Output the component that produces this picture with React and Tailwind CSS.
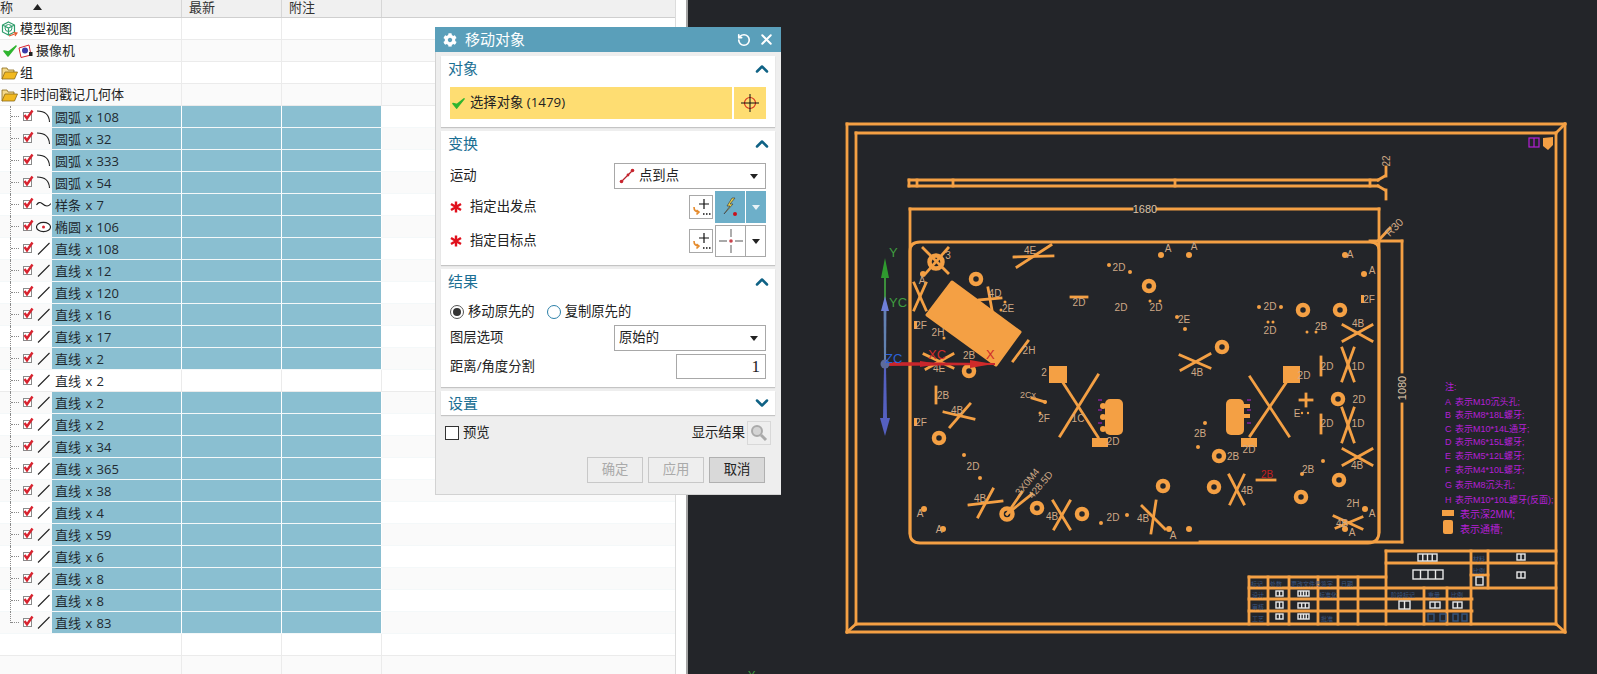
import React from 'react';
import { ChevronUp, ChevronDown, RotateCcw, X } from 'lucide-react';
import { FaCog } from 'react-icons/fa';

const ITEMS = [
    ['arc', '圆弧 x 108'], ['arc', '圆弧 x 32'], ['arc', '圆弧 x 333'], ['arc', '圆弧 x 54'],
    ['spline', '样条 x 7'], ['ellipse', '椭圆 x 106'],
    ['line', '直线 x 108'], ['line', '直线 x 12'], ['line', '直线 x 120'], ['line', '直线 x 16'],
    ['line', '直线 x 17'], ['line', '直线 x 2'], ['line', '直线 x 2', true], ['line', '直线 x 2'],
    ['line', '直线 x 2'], ['line', '直线 x 34'], ['line', '直线 x 365'], ['line', '直线 x 38'],
    ['line', '直线 x 4'], ['line', '直线 x 59'], ['line', '直线 x 6'], ['line', '直线 x 8'],
    ['line', '直线 x 8'], ['line', '直线 x 83'],
];

const RedCheck = () => (
    <svg width="12" height="13" viewBox="0 0 12 13" className="flex-none">
        <rect x="1.5" y="3.5" width="8" height="8" fill="#fff" stroke="#8a8a8a" />
        <path d="M2.5 6 L5 9.5 L10.5 1.5" fill="none" stroke="#d8232f" strokeWidth="2.4" />
    </svg>
);

const GeomIcon = ({ type }) => (
    <svg width="15" height="15" viewBox="0 0 15 15" className="flex-none ml-[2px]">
        {type === 'arc' && <path d="M1 2 Q13 2 13.5 13" fill="none" stroke="#222" strokeWidth="1.1" />}
        {type === 'spline' && <path d="M0.5 8 Q3 4 6 6.5 T11 9 T15 6.5" fill="none" stroke="#222" strokeWidth="1.1" />}
        {type === 'ellipse' && (
            <>
                <ellipse cx="7.5" cy="8" rx="7" ry="4.6" fill="#fff" stroke="#222" strokeWidth="1.1" />
                <circle cx="7.5" cy="8" r="1.5" fill="#d8232f" />
            </>
        )}
        {type === 'line' && <path d="M2 13.5 L13.5 2" fill="none" stroke="#222" strokeWidth="1.1" />}
    </svg>
);

const Folder = () => (
    <svg width="17" height="14" viewBox="0 0 17 14" className="flex-none">
        <path d="M1 3 L1 2 L6 2 L7 4 L13 4 L13 6 L1 13 Z" fill="#f4d98a" stroke="#8a6a1a" strokeWidth="0.8" />
        <path d="M1 13 L4 6 L16.5 6 L13.5 13 Z" fill="#f2b91f" stroke="#8a6a1a" strokeWidth="0.8" />
    </svg>
);

const ViewIcon = () => (
    <svg width="17" height="17" viewBox="0 0 17 17" className="flex-none">
        <path d="M7.5 1 L13.5 4 L13.5 11 L7.5 14 L1.5 11 L1.5 4 Z M1.5 4 L7.5 7 L13.5 4 M7.5 7 L7.5 14" fill="none" stroke="#2f9e6c" strokeWidth="1.2" />
        <circle cx="7.5" cy="7" r="3.5" fill="none" stroke="#2f9e6c" strokeWidth="1" />
        <path d="M8 15 L15 12.5 M12.5 11.5 L16 12 L14 15" fill="none" stroke="#e4572e" strokeWidth="1.2" />
    </svg>
);

const GreenCheck = ({ size = 14 }) => (
    <svg width={size} height={size} viewBox="0 0 14 14" className="flex-none">
        <path d="M1 7 L5 12 L13 2 L5.5 8 Z" fill="#2fb52f" stroke="#2fb52f" strokeWidth="1.6" strokeLinejoin="round" />
    </svg>
);

const CameraIcon = () => (
    <svg width="15" height="15" viewBox="0 0 15 15" className="flex-none">
        <path d="M1 4 L11 1 L13 11 L3 13.5 Z" fill="#fff" stroke="#d8232f" strokeWidth="1" />
        <circle cx="7" cy="6.5" r="3" fill="#3a3aa8" />
        <rect x="11" y="8" width="3.5" height="4" fill="#222" />
    </svg>
);

const HeaderCell = ({ width, children }) => (
    <div className={`${width} flex-none h-full border-r border-[#d6d6d6] flex items-center leading-[15px] overflow-hidden`}>{children}</div>
);

const PlainRow = ({ alt, children }) => (
    <div className={`flex h-[22px] flex-none border-b border-[#ebebeb] ${alt ? 'bg-[#fafafa]' : 'bg-white'}`}>
        <div className="w-[182px] flex-none border-r border-[#ebebeb] flex items-center overflow-hidden pt-[1px]">{children}</div>
        <div className="w-[100px] flex-none border-r border-[#ebebeb]" />
        <div className="w-[100px] flex-none border-r border-[#ebebeb]" />
        <div className="flex-1" />
    </div>
);

const TreeRow = ({ type, label, plain, alt, last }) => {
    const blue = plain ? '' : 'bg-[#8abfd1]';
    return (
        <div className={`flex h-[22px] flex-none border-b ${alt ? 'bg-[#fafafa]' : 'bg-white'} ${plain ? 'border-[#ebebeb]' : 'border-[#f4f8f9]'}`}>
            <div className="w-[52px] flex-none flex items-center">
                <div className={`ml-[10px] w-[9px] flex-none self-start ${last ? 'h-[11px]' : 'h-[22px]'} border-l border-dotted border-[#8a8a8a]`}>
                    <div className="h-[11px] border-b border-dotted border-[#8a8a8a]" />
                </div>
                <div className="ml-[3px] mb-[3px]"><RedCheck /></div>
                <GeomIcon type={type} />
            </div>
            <div className={`w-[130px] flex-none pl-[3px] pt-[2px] flex items-center text-[#1f2a30] [word-spacing:1px] border-r ${plain ? 'border-[#ebebeb]' : 'border-white'} ${blue}`}>{label}</div>
            <div className={`w-[100px] flex-none border-r ${plain ? 'border-[#ebebeb]' : 'border-white'} ${blue}`} />
            <div className={`w-[100px] flex-none border-r ${plain ? 'border-[#ebebeb]' : 'border-white'} ${blue}`} />
            <div className="flex-1" />
        </div>
    );
};

const TreePanel = () => (
    <div className="w-[676px] flex-none h-full flex flex-col overflow-hidden border-r border-[#dcdcdc] text-[13px] text-[#222]">
        <div className="h-[18px] flex-none flex bg-[#f0f0f0] border-b border-[#cfcfcf] text-[#333]">
            <HeaderCell width="w-[182px]">
                <span className="mb-[2px]">称</span>
                <svg width="9" height="6" viewBox="0 0 9 6" className="ml-[20px] mb-[3px]"><path d="M0 6 L4.5 0 L9 6 Z" fill="#222" /></svg>
            </HeaderCell>
            <HeaderCell width="w-[100px]"><span className="ml-[7px] mb-[2px]">最新</span></HeaderCell>
            <HeaderCell width="w-[100px]"><span className="ml-[7px] mb-[2px]">附注</span></HeaderCell>
        </div>
        <PlainRow><span className="ml-[1px] mr-[2px]"><ViewIcon /></span>模型视图</PlainRow>
        <PlainRow alt><span className="ml-[3px]"><GreenCheck /></span><span className="ml-[1px] mr-[3px]"><CameraIcon /></span>摄像机</PlainRow>
        <PlainRow><span className="ml-[1px] mr-[2px]"><Folder /></span>组</PlainRow>
        <PlainRow alt><span className="ml-[1px] mr-[2px]"><Folder /></span>非时间戳记几何体</PlainRow>
        {ITEMS.map(([type, label, plain], i) => (
            <TreeRow key={i} type={type} label={label} plain={plain} alt={i % 2 === 1} last={i === ITEMS.length - 1} />
        ))}
        <PlainRow />
        <PlainRow alt />
    </div>
);

const Section = ({ title, open = true, children }) => (
    <div className="bg-white shadow-[0_1px_1px_#c4c4c4]">
        <div className={`${open ? 'h-[26px] pb-[1px]' : 'h-[24px]'} px-[7px] flex items-center justify-between text-[15px] text-[#1b6f94]`}>
            <span>{title}</span>
            {open
                ? <ChevronUp size={20} strokeWidth={3} className="text-[#0f6285] mr-[-4px]" />
                : <ChevronDown size={20} strokeWidth={3} className="text-[#0f6285] mr-[-4px]" />}
        </div>
        {children}
    </div>
);

const Star = () => (
    <svg width="12" height="12" viewBox="0 0 12 12" className="flex-none">
        <path d="M6 0.5 V11.5 M1 3 L11 9 M11 3 L1 9" stroke="#e0101c" strokeWidth="2.4" />
    </svg>
);

const InferButton = () => (
    <div className="w-[24px] h-[24px] flex-none border border-[#a8a8a8] bg-white flex items-center justify-center">
        <svg width="20" height="20" viewBox="0 0 20 20">
            <path d="M13 2 V12 M8 7 H18" stroke="#111" strokeWidth="1.2" />
            <path d="M3 10 Q3 15 8 15 M5.5 13 L8 15 L5.5 17.5" fill="none" stroke="#e58a2b" strokeWidth="1.6" />
            <path d="M12 17 H13.5 M15 17 H16.5 M18 17 H19.5" stroke="#111" strokeWidth="1.6" />
        </svg>
    </div>
);

const Caret = ({ color = '#222' }) => (
    <svg width="8" height="5" viewBox="0 0 8 5" className="flex-none"><path d="M0 0 H8 L4 5 Z" fill={color} /></svg>
);

const Select = ({ children }) => (
    <div className="w-[152px] h-[26px] flex-none border border-[#a8a8a8] bg-white flex items-center justify-between pl-[4px] pr-[7px]">
        <span className="flex items-center">{children}</span>
        <Caret />
    </div>
);

const Radio = ({ on }) => (
    <span className={`w-[14px] h-[14px] flex-none rounded-full border flex items-center justify-center ${on ? 'border-[#555]' : 'border-[#2c7fa8]'}`}>
        {on && <span className="w-[8px] h-[8px] rounded-full bg-[#333]" />}
    </span>
);

const ActionButton = ({ children, on }) => (
    <div className={`w-[56px] h-[26px] border flex items-center justify-center ${on ? 'border-[#b0b0b0] bg-[#d9d9d9] text-[#222]' : 'border-[#c8c8c8] text-[#aaa]'}`}>{children}</div>
);

const Dialog = () => (
    <div className="absolute left-[435px] top-[27px] w-[346px] h-[468px] bg-[#eeeeee] border-l border-b border-[#d2d2d2] text-[13.33px] text-[#222]">
        <div className="h-[25px] bg-[#5a9fba] flex items-center pl-[8px] pr-[6px] text-white text-[15px] ml-[-1px]">
            <FaCog size={14} />
            <span className="ml-[8px] flex-1">移动对象</span>
            <RotateCcw size={14} strokeWidth={2.8} className="mr-[7px]" />
            <X size={17} strokeWidth={2.8} />
        </div>
        <div className="ml-[5px] mr-[6px] mt-[4px] flex flex-col gap-[4px]">
            <Section title="对象">
                <div className="px-[9px] pt-[5px] pb-[8px] flex gap-[2px]">
                    <div className="flex-1 h-[32px] bg-[#fedd72] flex items-center pl-[2px]">
                        <GreenCheck size={13} /><span className="ml-[5px]">选择对象 (1479)</span>
                    </div>
                    <div className="w-[32px] h-[32px] bg-[#fedd72] flex items-center justify-center">
                        <svg width="20" height="20" viewBox="0 0 20 20">
                            <circle cx="10" cy="10" r="5.5" fill="none" stroke="#d8321f" strokeWidth="1.2" />
                            <path d="M10 1 V19 M1 10 H19" stroke="#111" strokeWidth="1" />
                        </svg>
                    </div>
                </div>
            </Section>
            <Section title="变换">
                <div className="px-[9px] pt-[6px] pb-[8px] flex flex-col gap-[2px]">
                    <div className="flex items-center justify-between">
                        <span>运动</span>
                        <Select>
                            <svg width="16" height="16" viewBox="0 0 16 16" className="mr-[4px]">
                                <path d="M2 14 L14 2" stroke="#b5232c" strokeWidth="1.2" />
                                <circle cx="2.5" cy="13.5" r="1.8" fill="#c8242e" /><circle cx="13.5" cy="2.5" r="1.8" fill="#c8242e" />
                                <circle cx="9" cy="7" r="1.4" fill="#c8242e" />
                            </svg>
                            点到点
                        </Select>
                    </div>
                    <div className="h-[32px] flex items-center">
                        <Star /><span className="ml-[8px] flex-1">指定出发点</span>
                        <InferButton />
                        <div className="ml-[2px] w-[51px] h-[32px] bg-[#6dafc9] flex items-center">
                            <div className="w-[31px] h-full border-r border-white flex items-center justify-center">
                                <svg width="18" height="20" viewBox="0 0 18 20">
                                    <path d="M11 1 L6 9 L9 9 L3 17 L12 7 L9 7 L14 1 Z" fill="#e8d14a" stroke="#444" strokeWidth="0.7" />
                                    <circle cx="14" cy="17" r="2" fill="#c8101c" />
                                </svg>
                            </div>
                            <div className="flex-1 flex justify-center"><Caret color="#e8f2f6" /></div>
                        </div>
                    </div>
                    <div className="h-[32px] flex items-center">
                        <Star /><span className="ml-[8px] flex-1">指定目标点</span>
                        <InferButton />
                        <div className="ml-[2px] w-[51px] h-[32px] border border-[#a8a8a8] flex items-center">
                            <div className="w-[30px] h-full border-r border-[#a8a8a8] flex items-center justify-center">
                                <svg width="26" height="26" viewBox="0 0 26 26">
                                    <path d="M13 1 V9 M13 17 V25" stroke="#777" strokeWidth="1.2" />
                                    <path d="M1 13 H9 M17 13 H25" stroke="#555" strokeWidth="1.2" />
                                    <circle cx="13" cy="13" r="1.8" fill="#c8424c" />
                                </svg>
                            </div>
                            <div className="flex-1 flex justify-center"><Caret /></div>
                        </div>
                    </div>
                </div>
            </Section>
            <Section title="结果">
                <div className="px-[9px] pb-[8px] flex flex-col">
                    <div className="h-[30px] pt-[4px] flex items-center">
                        <Radio on /><span className="ml-[4px]">移动原先的</span>
                        <span className="ml-[12px]"><Radio /></span><span className="ml-[4px]">复制原先的</span>
                    </div>
                    <div className="flex items-center justify-between">
                        <span>图层选项</span>
                        <Select>原始的</Select>
                    </div>
                    <div className="mt-[3px] flex items-center justify-between">
                        <span>距离/角度分割</span>
                        <div className="w-[90px] h-[25px] border border-[#a8a8a8] bg-white flex items-center justify-end pr-[5px] font-['Liberation_Serif',serif] text-[17px]">1</div>
                    </div>
                </div>
            </Section>
            <Section title="设置" open={false} />
        </div>
        <div className="mt-[6px] pl-[9px] pr-[10px] h-[24px] flex items-center">
            <span className="w-[14px] h-[14px] flex-none border border-[#333] bg-white" />
            <span className="ml-[4px] flex-1">预览</span>
            <span className="mr-[2px]">显示结果</span>
            <div className="w-[24px] h-[24px] border border-[#d8d8d8] flex items-center justify-center">
                <svg width="18" height="18" viewBox="0 0 18 18">
                    <circle cx="7" cy="7" r="5" fill="#d4d4d4" stroke="#aaa" strokeWidth="2" />
                    <path d="M11 11 L16 16" stroke="#aaa" strokeWidth="3" />
                </svg>
            </div>
        </div>
        <div className="mt-[12px] pr-[16px] flex justify-end gap-[5px]">
            <ActionButton>确定</ActionButton>
            <ActionButton>应用</ActionButton>
            <ActionButton on>取消</ActionButton>
        </div>
    </div>
);

// drawing data, in page coordinates
const LINES = [
    [847, 124, 1565, 124], [847, 124, 847, 632], [847, 632, 1565, 632], [1565, 124, 1565, 632],
    [856, 133, 1556, 133], [856, 133, 856, 624], [856, 624, 1556, 624], [1556, 133, 1556, 624],
    [1565, 124, 1556, 133], [847, 632, 856, 624], [1565, 632, 1556, 624],
    [909, 180, 1378, 180], [909, 186, 1378, 186], [909, 180, 909, 186], [953, 180, 953, 186], [1175, 180, 1175, 186], [1370, 180, 1370, 186],
    [917, 180, 917, 186], [1378, 180, 1385, 176], [1378, 186, 1385, 190], [1386, 167, 1386, 176], [1386, 190, 1386, 199],
    [910, 209, 1132, 209], [1157, 209, 1379, 209], [910, 209, 910, 533],
    [1379, 209, 1379, 532], [1402, 241, 1402, 372], [1402, 404, 1402, 542], [1370, 241, 1402, 241], [1378, 241, 1390, 228],
    [1200, 542, 1402, 542],
    // crosses
    [923, 248, 948, 273], [948, 248, 926, 273], [914, 283, 926, 310], [926, 283, 914, 310],
    [1014, 257, 1053, 256], [1017, 267, 1051, 245], [979, 300, 1001, 298], [988, 288, 992, 310],
    [924, 354, 953, 368], [953, 354, 926, 369], [1013, 361, 1028, 341],
    [1058, 375, 1098, 437], [1098, 375, 1060, 436], [1250, 377, 1289, 436], [1290, 377, 1250, 436],
    [1071, 297, 1087, 297], [1180, 355, 1210, 368], [1210, 354, 1181, 370],
    [936, 387, 936, 403], [1032, 398, 1045, 402], [944, 412, 974, 419], [950, 427, 970, 404],
    [969, 505, 1002, 501], [978, 517, 993, 489], [1007, 514, 1022, 492], [1007, 514, 1032, 494],
    [1053, 501, 1070, 529], [1070, 501, 1054, 529], [1142, 506, 1165, 529], [1156, 501, 1151, 533],
    [1321, 415, 1321, 433], [1342, 408, 1354, 442], [1354, 408, 1342, 442],
    [1343, 449, 1372, 465], [1372, 449, 1343, 465], [1229, 475, 1244, 504], [1244, 475, 1230, 504],
    [1334, 516, 1362, 529], [1336, 528, 1362, 517], [1257, 480, 1275, 480],
    [1343, 325, 1372, 341], [1372, 325, 1343, 341], [1321, 357, 1321, 375], [1342, 348, 1354, 381], [1354, 348, 1342, 381],
    [1300, 400, 1312, 400], [1306, 394, 1306, 406],
    // title block
    [1386, 551, 1556, 551], [1386, 563, 1556, 563], [1386, 588, 1556, 588], [1249, 588, 1386, 588], [1249, 577, 1386, 577],
    [1249, 599, 1472, 599], [1249, 611, 1472, 611], [1471, 575, 1488, 575],
    [1249, 577, 1249, 624], [1268, 577, 1268, 624], [1289, 577, 1289, 624], [1318, 577, 1318, 624], [1338, 577, 1338, 624], [1358, 577, 1358, 624],
    [1386, 551, 1386, 624], [1424, 588, 1424, 624], [1447, 588, 1447, 624], [1471, 551, 1471, 624], [1488, 551, 1488, 588],
];

const RINGS = [
    [936, 262, 6.5], [976, 279, 5], [969, 371, 5], [1149, 286, 5], [1222, 347, 5], [939, 438, 5], [1007, 514, 5.5], [1037, 508, 5],
    [1082, 514, 5], [1163, 486, 5], [1214, 487, 5], [1219, 456, 5], [1338, 399, 5], [1339, 480, 5], [1301, 497, 5], [1303, 310, 5], [1340, 310, 5],
];

const DOTS = [
    [923, 274, 3], [1161, 255, 3], [1189, 255, 3], [1345, 255, 3], [1364, 274, 3], [1109, 265, 2], [1130, 272, 2], [1005, 302, 1.5], [1001, 310, 1.5],
    [1150, 301, 1.5], [1160, 301, 1.5], [1177, 317, 2], [1185, 329, 2], [1259, 307, 2], [1281, 307, 2], [1268, 322, 1.5], [1273, 322, 1.5],
    [1307, 332, 1.5], [1316, 332, 1.5], [1040, 413, 1.5], [1205, 423, 2], [1198, 447, 2], [964, 455, 2], [980, 478, 2], [924, 509, 3], [943, 529, 3],
    [1101, 523, 2], [1127, 515, 2], [1169, 529, 3], [1189, 529, 3], [1103, 406, 3], [1103, 417, 3], [1103, 429, 3], [1323, 461, 2], [1302, 474, 2],
    [1365, 509, 3], [1345, 529, 3], [1302, 413, 1.2], [1308, 413, 1.2], [1045, 402, 2], [944, 338, 1.5],
];

const BLOCKS = [
    { x: 1049, y: 366, w: 18, h: 17 }, { x: 1283, y: 366, w: 17, h: 17 }, { x: 1092, y: 438, w: 16, h: 9 }, { x: 1241, y: 438, w: 16, h: 9 },
    { x: 1105, y: 399, w: 18, h: 36, r: 5 }, { x: 1226, y: 399, w: 18, h: 36, r: 5 }, { x: 914, y: 321, w: 3, h: 8 }, { x: 914, y: 418, w: 3, h: 8 }, { x: 1361, y: 295, w: 3, h: 8 },
    { x: 1442, y: 510, w: 12, h: 6 }, { x: 1443, y: 520, w: 10, h: 14, r: 2 }, { x: 1238, y: 404, w: 12, h: 4 }, { x: 1238, y: 414, w: 12, h: 4 },
];

const LABELS = [
    ['3', 948, 259], ['A', 922, 284], ['4E', 1030, 254], ['4D', 995, 297], ['2E', 1008, 312], ['2F', 921, 329], ['2H', 938, 336], ['2B', 969, 359],
    ['4E', 939, 372], ['2H', 1029, 354], ['2', 1044, 376], ['2D', 1119, 271], ['A', 1168, 252], ['A', 1194, 250], ['2D', 1079, 306], ['2D', 1121, 311],
    ['2D', 1156, 311], ['2E', 1184, 323], ['4B', 1197, 376], ['2B', 943, 399], ['2F', 1044, 422], ['4B', 957, 414], ['2F', 921, 426], ['2D', 973, 470],
    ['4B', 980, 502], ['A', 920, 517], ['A', 939, 533], ['4B', 1052, 520], ['2D', 1113, 521], ['4B', 1143, 522], ['A', 1173, 539], ['1C', 1078, 422],
    ['2D', 1113, 445], ['2D', 1249, 453], ['2D', 1304, 379], ['E', 1297, 417], ['2D', 1327, 427], ['1D', 1358, 427], ['2D', 1359, 403], ['4B', 1357, 469],
    ['2B', 1308, 473], ['4B', 1247, 494], ['2B', 1233, 460], ['2B', 1200, 437], ['2H', 1353, 507], ['A', 1372, 517], ['A', 1352, 536], ['4B', 1342, 527],
    ['A', 1350, 258], ['A', 1372, 274], ['2F', 1369, 303], ['2D', 1270, 310], ['2D', 1270, 334], ['2B', 1321, 330], ['4B', 1358, 327], ['2D', 1327, 370], ['1D', 1358, 370],
];

const NOTES = [
    ['A', '表示M10沉头孔;', 401], ['B', '表示M8*18L螺牙;', 414], ['C', '表示M10*14L通牙;', 428], ['D', '表示M6*15L螺牙;', 441],
    ['E', '表示M5*12L螺牙;', 455], ['F', '表示M4*10L螺牙;', 469], ['G', '表示M8沉头孔;', 484], ['H', '表示M10*10L螺牙(反面);', 499],
];

// x, y, cells, width, height
const TITLE_MARKS = [
    [1418, 554, 4, 19, 7], [1413, 570, 4, 30, 9], [1517, 554, 2, 8, 6], [1517, 572, 2, 8, 6], [1476, 577, 1, 7, 8],
    [1276, 591, 2, 7, 5], [1276, 602, 2, 7, 6], [1276, 614, 2, 7, 5], [1298, 591, 4, 11, 5], [1298, 603, 3, 11, 5], [1298, 614, 4, 11, 5],
    [1399, 601, 2, 11, 8], [1430, 602, 2, 10, 6], [1453, 602, 2, 9, 6],
];

const DIM_TEXT = [
    ['标记', 1251, 586], ['处数', 1270, 586], ['更改文件号', 1291, 586], ['签字', 1321, 586], ['日期', 1341, 586],
    ['设计', 1252, 597], ['审核', 1252, 609], ['工艺', 1252, 621], ['标准化', 1319, 597], ['批准', 1321, 621],
    ['材料', 1473, 561], ['比例', 1473, 573], ['阶段标记', 1391, 597], ['重量', 1428, 597], ['比例', 1451, 597],
];

const Canvas = () => (
    <div className="flex-1 h-full bg-[#232529] overflow-hidden">
        <svg width="909" height="674" viewBox="688 0 909 674" className="block">
            <path d="M910 251 Q910 242 920 242 H1370 Q1379 242 1379 250 V532 Q1379 543 1368 543 H920 Q910 543 910 533 Z" fill="none" stroke="#f4a044" strokeWidth="2.8" />
            <g stroke="#f4a044" strokeWidth="2.8" strokeLinecap="square">
                {LINES.map(([x1, y1, x2, y2], i) => <line key={i} x1={x1} y1={y1} x2={x2} y2={y2} />)}
            </g>
            <polygon points="952,282 1020,332 996,365 927,315" fill="#f4a044" stroke="#f4a044" strokeWidth="3" strokeLinejoin="round" />
            <g fill="none" stroke="#f4a044" strokeWidth="4.5">
                {RINGS.map(([cx, cy, r], i) => <circle key={i} cx={cx} cy={cy} r={r} />)}
            </g>
            <g fill="#f4a044">
                {DOTS.map(([cx, cy, r], i) => <circle key={i} cx={cx} cy={cy} r={r} />)}
                {BLOCKS.map((b, i) => <rect key={i} x={b.x} y={b.y} width={b.w} height={b.h} rx={b.r || 0} />)}
                <path d="M1543 138 L1553 137 V145 L1548 150 L1543 146 Z" />
            </g>
            <g fontFamily="'Liberation Sans', sans-serif" fontSize="10" fill="#cfa986" textAnchor="middle">
                {LABELS.map(([t, x, y], i) => <text key={i} x={x} y={y}>{t}</text>)}
                <text x="1145" y="213" fontSize="11" fill="#ddc4a8">1680</text>
                <text transform="translate(1406 388) rotate(-90)" fontSize="11" fill="#ddc4a8">1080</text>
                <text transform="translate(1390 161) rotate(-90)" fontSize="10">22</text>
                <text transform="translate(1397 230) rotate(-45)" fontSize="11">R30</text>
                <text transform="translate(1030 484) rotate(-50)" fontSize="10">3X0M4</text>
                <text transform="translate(1043 487) rotate(-50)" fontSize="10">428.5D</text>
                <text x="1028" y="398" fontSize="9">2Cx</text>
                <text x="1267" y="478" fill="#c41e1e">2B</text>
            </g>
            <g fontFamily="'Liberation Sans', 'Noto Sans CJK SC', sans-serif" fontSize="9" fill="#b51fd6">
                <text x="1445" y="390">注:</text>
                {NOTES.map(([k, t, y]) => <text key={y} y={y + 4}><tspan x="1445">{k}</tspan><tspan x="1455">{t}</tspan></text>)}
                <text x="1460" y="518" fontSize="10">表示深2MM;</text>
                <text x="1460" y="533" fontSize="10">表示通槽;</text>
            </g>
            <g fontFamily="'Noto Sans CJK SC', sans-serif" fontSize="6" fill="#3b5580">
                {DIM_TEXT.map(([t, x, y], i) => <text key={i} x={x} y={y}>{t}</text>)}
            </g>
            <g fill="none" stroke="#e8e8e8" strokeWidth="1.4">
                {TITLE_MARKS.map(([x, y, n, w, h], i) => (
                    <g key={i}>
                        <rect x={x} y={y} width={w} height={h} />
                        {Array.from({ length: n - 1 }, (_, k) => (
                            <line key={k} x1={x + (w / n) * (k + 1)} y1={y} x2={x + (w / n) * (k + 1)} y2={y + h} />
                        ))}
                    </g>
                ))}
            </g>
            <g fill="none" stroke="#35567f" strokeWidth="1.4">
                <rect x="1428" y="614" width="6" height="7" /><rect x="1440" y="614" width="6" height="7" />
                <rect x="1453" y="614" width="5" height="7" /><rect x="1462" y="614" width="5" height="7" />
            </g>
            <g fill="none" stroke="#b51fd6" strokeWidth="1.2">
                <rect x="1529" y="138" width="10" height="9" /><line x1="1534" y1="138" x2="1534" y2="147" />
                <path d="M1098 400 H1102 M1098 410 H1102 M1098 423 H1102 M1247 400 H1251 M1247 410 H1251 M1247 423 H1251" />
            </g>
            {/* csys arrows */}
            <line x1="885" y1="364" x2="885" y2="275" stroke="#3c8f3c" strokeWidth="2" />
            <polygon points="885,258 881,278 889,278" fill="#2f9a2f" />
            <polygon points="885,296 881,311 889,311" fill="#6f7fd8" />
            <polygon points="883.5,310 886.5,310 886,364 884,364" fill="#6f7fd8" opacity="0.75" />
            <polygon points="884,366 886,366 887,418 883,418" fill="#5560c0" />
            <polygon points="885,436 880,418 890,418" fill="#5560c0" />
            <polygon points="885,362 995,363 995,365 885,366" fill="#c8262c" />
            <polygon points="970,360 993,364 970,368" fill="#d02a2a" />
            <polygon points="920,361 940,364 920,367" fill="#c8262c" />
            <circle cx="885" cy="364" r="4.5" fill="#5d6b9c" />
            <g fontFamily="'Liberation Sans', sans-serif" fontSize="13">
                <text x="889" y="257" fill="#3f9c3f">Y</text>
                <text x="889" y="307" fill="#3f9c3f">YC</text>
                <text x="885" y="363" fill="#2b62d8">ZC</text>
                <text x="928" y="359" fill="#d02a2a">XC</text>
                <text x="986" y="359" fill="#d02a2a">X</text>
                <text x="748" y="679" fill="#3f9c3f" fontSize="11">Y</text>
            </g>
        </svg>
    </div>
);

export default function App() {
    return (
        <div className="relative w-[1597px] h-[674px] flex overflow-hidden bg-white font-['Open_Sans','Noto_Sans_CJK_SC',sans-serif]">
            <TreePanel />
            <div className="w-[10px] flex-none bg-white" />
            <div className="w-[2px] flex-none bg-[#a4a4a4]" />
            <Canvas />
            <Dialog />
        </div>
    );
}
